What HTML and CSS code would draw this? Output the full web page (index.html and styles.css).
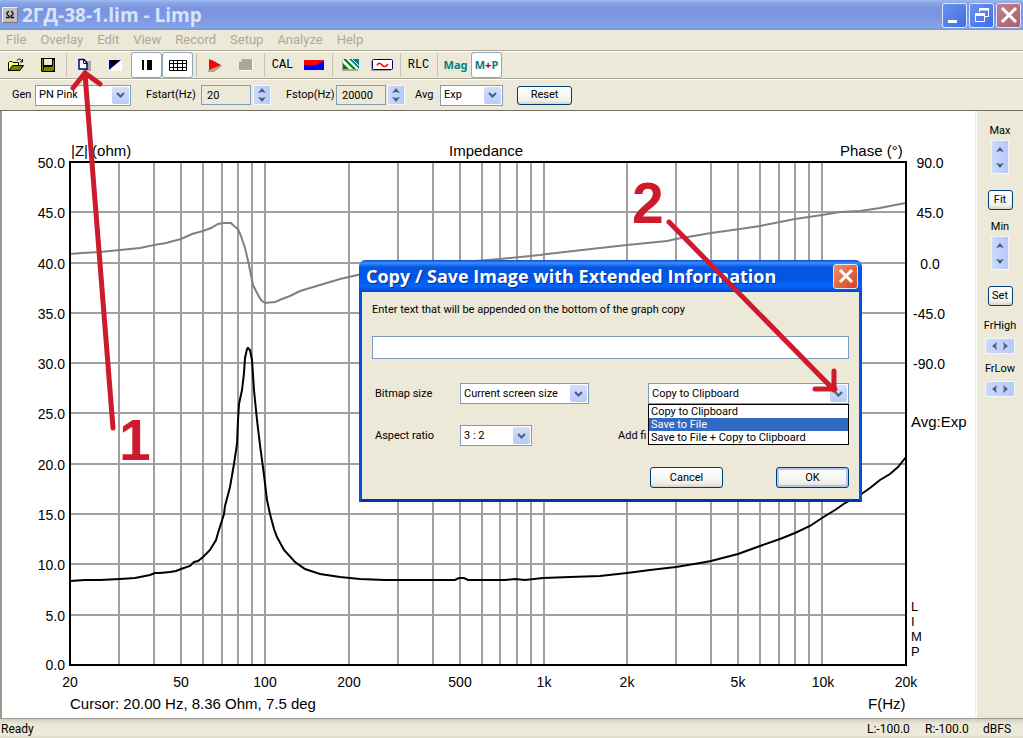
FILE: index.html
```html
<!DOCTYPE html>
<html lang="en">
<head>
    <meta charset="UTF-8">
    <meta name="viewport" content="width=device-width, initial-scale=1.0">
    <title>2ГД-38-1.lim - Limp</title>
    <link rel="stylesheet" href="styles.css">
</head>
<body>
    <svg class="defs" width="0" height="0" aria-hidden="true">
        <symbol id="down" viewBox="0 0 9 6"><path d="M1 1l3.500 3.500L8 1" fill="none" stroke="#4d6185" stroke-width="2.200"/></symbol>
        <symbol id="tri-up" viewBox="0 0 8 5"><path d="M0 5L4 0l4 5L4 4z" fill="#4d6185"/></symbol>
        <symbol id="tri-down" viewBox="0 0 8 5"><path d="M0 0l4 5 4-5-4 1z" fill="#4d6185"/></symbol>
        <symbol id="tri-left" viewBox="0 0 5 8"><path d="M5 0L0 4l5 4-1-4z" fill="#4d6185"/></symbol>
        <symbol id="tri-right" viewBox="0 0 5 8"><path d="M0 0l5 4-5 4 1-4z" fill="#4d6185"/></symbol>
    </svg>

    <header class="titlebar">
        <svg class="app-icon" width="16" height="16" viewBox="0 0 16 16"><path fill="#c0c0c0" d="M0 0h16v16H0z"/><path d="M.5 15V.5H15" fill="none" stroke="#eee"/><path d="M1 15.500h14.500V1" fill="none" stroke="#777"/><path d="M4 10.500h3V9L5 7.500V6l1.500-1.500H7M12 10.500H9V9l2-1.500V6L9.500 4.500H9" fill="none" stroke="#111" stroke-width="1.300"/></svg>
        <h1>2ГД-38-1.lim - Limp</h1>
        <div class="win-btns">
            <button class="win-btn" aria-label="Minimize"><svg width="22" height="22" viewBox="0 0 22 22"><path fill="#fff" d="M4 16h9v3H4z"/></svg></button>
            <button class="win-btn" aria-label="Restore"><svg width="22" height="22" viewBox="0 0 22 22"><path fill="none" stroke="#fff" d="M8.500 8V4.500h9v8H14M4.500 9.500h9v8h-9z"/><path fill="#fff" d="M8 4h10v2.500H8zM4 9h10v3H4z"/></svg></button>
            <button class="win-btn close" aria-label="Close"><svg width="22" height="22" viewBox="0 0 22 22"><path stroke="#fff" stroke-width="3" d="M4 4l14 14M18 4L4 18"/></svg></button>
        </div>
    </header>

    <nav class="menubar">
        <a href="#">File</a><a href="#">Overlay</a><a href="#">Edit</a><a href="#">View</a><a href="#">Record</a><a href="#">Setup</a><a href="#">Analyze</a><a href="#">Help</a>
    </nav>

    <div class="toolbar">
        <button class="tool" aria-label="Open"><svg width="17" height="14" viewBox="0 0 17 14"><path fill="#ff6" d="M1 4h4l1 1h5v3H4l-3 5z"/><path fill="#808000" d="M4 8h12l-4 5H1z"/><path fill="none" stroke="#000" d="M.5 13V4.500l1-1H4l1 1h5.500V8M1 12.500h10.500L15.500 7.500H4.500L1 12.500M9 2.500c1-2 4-2 5 1M14.500 1v3H12"/></svg></button>
        <button class="tool" aria-label="Save"><svg width="14" height="14" viewBox="0 0 14 14"><path d="M0 0h14v14H1l-1-1z"/><path fill="#ece9d8" d="M3 1h8v6H3zM9 10h2v3H9z"/><path fill="#808000" d="M1 1h1v11h1V9h8V8h1V2h1v10h-1v1H2l-1-1z"/></svg></button>
        <span class="sep"></span>
        <button class="tool" aria-label="Copy"><svg width="15" height="14" viewBox="0 0 15 14"><path fill="#aca899" d="M8 3h6v10H8z"/><path fill="#fff" stroke="#000080" stroke-width="1.500" d="M2 1.500h5L10 5v6H2z"/><path fill="none" stroke="#000080" d="M6.500 1v4.500H10"/></svg></button>
        <button class="tool" aria-label="Invert colors"><svg width="13" height="11" viewBox="0 0 13 11"><path fill="#fff" d="M0 0h13v11H0z"/><path fill="#000080" d="M0 0h12L0 10z"/><path d="M2 0h8L2 7z"/></svg></button>
        <button class="tool on" aria-label="Pause"><svg width="12" height="10" viewBox="0 0 12 10"><path d="M1 0h2v10H1zM6 0h5v10H6z"/></svg></button>
        <button class="tool on" aria-label="Grid"><svg width="18" height="11" viewBox="0 0 18 11"><path fill="none" stroke="#000" d="M.5.500h17v10H.5zM0 3.500h18M0 7.500h18M4.500 0v11M8.500 0v11M13.500 0v11"/></svg></button>
        <span class="sep"></span>
        <button class="tool" aria-label="Record"><svg width="14" height="13" viewBox="0 0 14 13"><path fill="#aca899" d="M2 1h3l9 6-8 6H0v-2h2z"/><path fill="red" d="M1 0l12 6-12 5z"/></svg></button>
        <button class="tool" aria-label="Stop"><svg width="14" height="12" viewBox="0 0 14 12"><path fill="#fff" d="M3 1h11v9l-2 2H1z"/><path fill="#aca899" d="M3 0h10v11H0V3h2z"/></svg></button>
        <span class="sep"></span>
        <button class="tool mono">CAL</button>
        <button class="tool" aria-label="Spectrum"><svg width="20" height="10" viewBox="0 0 20 10"><path fill="#00f" d="M0 0h20v10H0z"/><path fill="red" d="M0 0h20v1l-8 4H0z"/></svg></button>
        <span class="sep"></span>
        <button class="tool" aria-label="Overlay"><svg width="17" height="12" viewBox="0 0 17 12"><path fill="#aca899" d="M0 2h16v10H0z"/><path fill="#fff" d="M1 0h16v10H1z"/><path fill="#008000" d="M1 0h3l10 10h-3zM1 4l6 6H1z"/><path fill="#008080" d="M7 0h10v10L15 8z"/><path stroke="#fff" d="M10 0l7 7"/></svg></button>
        <button class="tool" aria-label="Generator"><svg width="22" height="12" viewBox="0 0 22 12"><path fill="#aca899" d="M0 2h20v10H0z"/><rect x="1.500" y=".5" width="20" height="10" rx="1" fill="#fff" stroke="#000080"/><path fill="none" stroke="red" stroke-width="1.500" d="M6 6.500c1-3 3-3 5-.5s4 2 6-1"/></svg></button>
        <span class="sep"></span>
        <button class="tool mono">RLC</button>
        <span class="sep"></span>
        <button class="tool teal">Mag</button>
        <button class="tool teal on">M<i>+</i>P</button>
    </div>

    <form class="params">
        <label for="gen">Gen</label>
        <span class="combo gen"><select id="gen"><option>PN Pink</option></select><span class="caret"><svg width="9" height="6"><use href="#down"/></svg></span></span>
        <label for="fstart">Fstart(Hz)</label>
        <input class="num" id="fstart" value="20">
        <span class="spin"><button type="button" aria-label="Fstart up"><svg width="8" height="5"><use href="#tri-up"/></svg></button><button type="button" aria-label="Fstart down"><svg width="8" height="5"><use href="#tri-down"/></svg></button></span>
        <label for="fstop">Fstop(Hz)</label>
        <input class="num" id="fstop" value="20000">
        <span class="spin"><button type="button" aria-label="Fstop up"><svg width="8" height="5"><use href="#tri-up"/></svg></button><button type="button" aria-label="Fstop down"><svg width="8" height="5"><use href="#tri-down"/></svg></button></span>
        <label for="avg">Avg</label>
        <span class="combo avg"><select id="avg"><option>Exp</option></select><span class="caret"><svg width="9" height="6"><use href="#down"/></svg></span></span>
        <button type="button" class="btn reset">Reset</button>
    </form>

    <main class="workspace">
        <svg class="chart" viewBox="2 111 973 607" preserveAspectRatio="xMinYMin meet" role="img" aria-label="Impedance">
            <g class="grid">
                <path d="M119 162v502M154 162v502M181 162v502M203 162v502M222 162v502M238 162v502M252 162v502M265 162v502M349 162v502M398 162v502M433 162v502M460 162v502M482 162v502M500 162v502M517 162v502M531 162v502M544 162v502M627 162v502M676 162v502M711 162v502M738 162v502M760 162v502M779 162v502M795 162v502M809 162v502M822 162v502"/>
                <path d="M70 212h836M70 263h836M70 313h836M70 363h836M70 413h836M70 464h836M70 514h836M70 564h836M70 615h836"/>
            </g>
            <polyline class="phase" points="70,254 82,253 100,252 120,250 140,248 154,245 166,243 181,239 192,234 203,231 211,228 218,224 224,223 231,223 234,226 238,229 241,236 245,248 249,265 253,285 257,293 261,300 265,303 275,302 282,299 290,296 300,291 320,285 340,279 362,274 400,268 450,263 500,259 540,255 547,254 600,248 627,245 667,241 676,239 711,233 740,229 760,226 780,222 795,219 822,215 840,212 860,211 880,208 895,205 906,203"/>
            <polyline class="imp" points="70,581 85,580 100,580 120,579 135,578 150,575 155,573 160,573 170,572 176,571 181,569 190,566 194,562 198,561 203,557 210,550 216,540 218,533 224,514 225,506 230,487 234,464 237,444 238,420 239,404 242,390 244,373 245,358 247,349 248,348 250,350 252,360 254,390 257,420 260,445 264,475 267,500 270,514 274,529 277,537 284,550 295,562 305,569 320,574 340,577 360,579 385,580 430,580 455,580 459,578 464,578 468,580 480,580 505,580 515,579 525,580 543,578 570,577 600,576 627,573 650,570 676,567 700,563 711,561 738,554 760,546 780,539 795,533 810,526 822,518 835,510 845,503 860,495 870,488 880,480 890,474 898,467 906,457"/>
            <path class="frame" d="M70 162h836v503H70z"/>
            <g class="tick end">
                <text x="65" y="168">50.0</text><text x="65" y="218">45.0</text><text x="65" y="269">40.0</text><text x="65" y="319">35.0</text><text x="65" y="369">30.0</text><text x="65" y="419">25.0</text><text x="65" y="470">20.0</text><text x="65" y="520">15.0</text><text x="65" y="570">10.0</text><text x="65" y="621">5.0</text><text x="65" y="670">0.0</text>
            </g>
            <g class="tick mid">
                <text x="930" y="168">90.0</text><text x="930" y="218">45.0</text><text x="930" y="269">0.0</text><text x="929" y="319">-45.0</text><text x="929" y="369">-90.0</text>
                <text x="70" y="687">20</text><text x="181" y="687">50</text><text x="265" y="687">100</text><text x="349" y="687">200</text><text x="460" y="687">500</text><text x="544" y="687">1k</text><text x="627" y="687">2k</text><text x="738" y="687">5k</text><text x="823" y="687">10k</text><text x="906" y="687">20k</text>
            </g>
            <g class="name">
                <text x="71" y="156">|Z| (ohm)</text><text x="449" y="156">Impedance</text><text x="840" y="156">Phase (°)</text>
                <text x="70" y="709">Cursor: 20.00 Hz, 8.36 Ohm, 7.5 deg</text><text x="868" y="709">F(Hz)</text>
                <text x="911" y="427">Avg:Exp</text>
            </g>
            <g class="logo">
                <text x="911" y="611">L</text><text x="911" y="626">I</text><text x="911" y="641">M</text><text x="911" y="656">P</text>
            </g>
        </svg>

        <aside class="side">
            <div class="group">
                <span>Max</span>
                <div class="spin tall"><button aria-label="Max up"><svg width="8" height="5"><use href="#tri-up"/></svg></button><button aria-label="Max down"><svg width="8" height="5"><use href="#tri-down"/></svg></button></div>
                <button class="btn small">Fit</button>
            </div>
            <div class="group">
                <span>Min</span>
                <div class="spin tall"><button aria-label="Min up"><svg width="8" height="5"><use href="#tri-up"/></svg></button><button aria-label="Min down"><svg width="8" height="5"><use href="#tri-down"/></svg></button></div>
                <button class="btn small">Set</button>
            </div>
            <div class="freq">
                <span>FrHigh</span>
                <div class="spin wide"><button aria-label="High limit down"><svg width="5" height="8"><use href="#tri-left"/></svg></button><button aria-label="High limit up"><svg width="5" height="8"><use href="#tri-right"/></svg></button></div>
            </div>
            <div class="freq">
                <span>FrLow</span>
                <div class="spin wide"><button aria-label="Low limit down"><svg width="5" height="8"><use href="#tri-left"/></svg></button><button aria-label="Low limit up"><svg width="5" height="8"><use href="#tri-right"/></svg></button></div>
            </div>
        </aside>
    </main>

    <footer class="status">
        <span class="ready">Ready</span><span>L:-100.0</span><span>R:-100.0</span><span>dBFS</span>
    </footer>

    <section class="dialog" role="dialog" aria-labelledby="dlg-title">
        <div class="dialog-title">
            <h2 id="dlg-title">Copy / Save Image with Extended Information</h2>
            <button class="win-btn red" aria-label="Close"><svg width="22" height="22" viewBox="0 0 22 22"><path stroke="#fff" stroke-width="3" d="M5 5l12 12M17 5L5 17"/></svg></button>
        </div>
        <form class="dialog-body">
            <label for="info">Enter text that will be appended on the bottom of the graph copy</label>
            <input class="info" id="info" type="text">
            <div class="row">
                <label class="key" for="size">Bitmap size</label>
                <span class="combo size"><select id="size"><option>Current screen size</option></select><span class="caret"><svg width="9" height="6"><use href="#down"/></svg></span></span>
                <div class="target">
                    <span class="combo"><select id="target" aria-label="Target"><option>Copy to Clipboard</option></select><span class="caret"><svg width="9" height="6"><use href="#down"/></svg></span></span>
                    <ul class="list"><li>Copy to Clipboard</li><li class="sel">Save to File</li><li>Save to File + Copy to Clipboard</li></ul>
                </div>
            </div>
            <div class="row">
                <label class="key" for="ratio">Aspect ratio</label>
                <span class="combo ratio"><select id="ratio"><option>3 : 2</option></select><span class="caret"><svg width="9" height="6"><use href="#down"/></svg></span></span>
                <span class="add">Add fi</span>
            </div>
            <div class="actions">
                <button type="button" class="btn">Cancel</button>
                <button type="button" class="btn default">OK</button>
            </div>
        </form>
    </section>

    <svg class="marks" viewBox="0 0 1023 738" preserveAspectRatio="xMinYMin meet">
        <path d="M113 428L85 74M73 88l12-15 15 11M669 222l165 168M815 389h20M834 371v19"/>
        <text x="119" y="460">1</text>
        <text x="632" y="223">2</text>
    </svg>
</body>
</html>
```

FILE: styles.css
```css
*{margin:0;padding:0;box-sizing:border-box}
body{min-height:100vh;display:flex;flex-direction:column;position:relative;background:#ece9d8;color:#000;font:11px/14px Roboto,"Noto Sans",sans-serif;overflow:hidden}
button,input,select{font:inherit;color:inherit}
button{border:none;background:none}
svg{display:block}
a{text-decoration:none;color:inherit}
.defs{position:absolute}

/* main window caption */
.titlebar{display:flex;align-items:center;height:30px;padding:0 2px;background:linear-gradient(#9db9ee 0,#8aa6e6 3px,#7b94e0 8px,#7d97e2 18px,#82a6e8 27px,#7a92dc 30px)}
.titlebar h1{flex:1;margin-left:4px;font:bold 19px/26px "Open Sans","Noto Sans",sans-serif;color:#d8e4f8}
.win-btns{display:flex;gap:2px}
.win-btn{width:25px;height:25px;border:1px solid #dfe8fb;border-radius:3px;background:linear-gradient(135deg,#6d92ee,#3f6ee6);display:flex;align-items:center;justify-content:center}
.win-btn.close{background:linear-gradient(135deg,#c08090,#a8606c)}
.win-btn.red{background:linear-gradient(135deg,#ee9070,#d8411c)}

.menubar{display:flex;gap:14px;height:21px;padding-left:6px;font-size:13px;line-height:20px;color:#aca899;border-bottom:1px solid #aca899}

.toolbar{display:flex;align-items:center;height:28px;padding-left:1px;border-top:1px solid #fff;border-bottom:1px solid #aca899}
.tool{width:31px;height:26px;display:flex;align-items:center;justify-content:center}
.tool.on{background:#fff;border:1px solid #8ba8bd;border-radius:3px}
.sep{width:6px;height:24px;background:linear-gradient(#c5c2b2,#c5c2b2) center/1px 100% no-repeat}
.mono{font:12px "Liberation Mono",monospace}
.teal{font-family:"Noto Sans",sans-serif;font-weight:bold;color:#008080}
.teal i{font-style:normal;color:#a00000}

.params{display:grid;grid-template-columns:23px 111px 55px 52px 33px 50px 51px 28px 25px 77px auto;justify-content:start;align-items:center;height:31px;padding-left:12px;border-top:1px solid #fff}
.combo{display:flex;height:21px;padding:1px;background:#fff;border:1px solid #7f9db9}
.combo select{flex:1;min-width:0;padding-left:2px;border:none;background:none;appearance:none}
.caret{width:17px;background:linear-gradient(#d3e0fd,#b9cbf6);border-radius:2px;display:flex;align-items:center;justify-content:center}
.gen{width:96px}
.avg{width:63px}
.num{width:50px;height:20px;padding-left:5px;background:#ece9d8;border:1px solid #7f9db9}
.spin{display:flex;flex-direction:column;width:18px;height:20px;border:1px solid #f5f6fb;background:linear-gradient(90deg,#cbd9fd,#b6c9f8)}
.spin button{flex:1;display:flex;align-items:center;justify-content:center}
.spin.tall{height:34px}
.spin.wide{flex-direction:row;width:30px;height:16px;padding:0 3px}
.btn{border:1px solid #003c74;border-radius:3px;background:linear-gradient(#fff,#f0f0ea 80%,#d8d2c8);text-align:center}
.reset{width:55px;height:19px}

.workspace{flex:1;display:flex;border-top:1px solid #716f64}
.chart{flex:1;min-width:0;background:#fff;border-left:2px solid #9c9a8c;border-right:1px solid #f0eee0;font-family:"Liberation Sans",Arial,sans-serif}
.grid path{fill:none;stroke:#a0a0a0;stroke-width:2}
.frame{fill:none;stroke:#000;stroke-width:2}
.phase,.imp{fill:none;stroke-width:2;stroke:#808080}
.imp{stroke:#000}
.grid,.frame{shape-rendering:crispEdges}
.tick{font-size:14px}
.name{font-size:15px}
.logo{font-size:13px}
.end{text-anchor:end}
.mid{text-anchor:middle}

.side{width:47px;padding-top:13px;border-left:1px solid #fff;display:flex;flex-direction:column;align-items:center;text-align:center}
.group,.freq{display:flex;flex-direction:column;align-items:center;gap:2px}
.group{height:96px}
.freq{height:43px;padding-top:3px;gap:5px}
.small{width:25px;height:20px;margin-top:14px}

.status{display:flex;height:20px;padding-left:1px;font-size:12px;line-height:20px;border-top:1px solid #9c9a8c;background:linear-gradient(#d0cdbc,#ece9d8 5px,#ece9d8 16px,#dedac8)}
.status span{width:58px}
.status .ready{flex:1}
.status span:last-child{width:40px}

/* save image dialog */
.dialog{position:absolute;left:359px;top:260px;width:503px;border:3px solid #0450dd;border-top:none;border-bottom-color:#0234b0;border-radius:7px 7px 0 0;background:#ece9d8}
.dialog-title{display:flex;align-items:center;height:32px;margin:0 -3px;padding:0 4px 0 7px;border-radius:7px 7px 0 0;background:linear-gradient(#0a4ccc,#3b8cff 3px,#0457e2 7px,#0254e4 18px,#0465fc 26px,#0148d0)}
.dialog-title h2{flex:1;white-space:nowrap;font:bold 18px/26px "Open Sans","Noto Sans",sans-serif;color:#fff;text-shadow:1px 1px #0b2f8f}
.dialog-body{padding:11px 10px 11px}
.info{display:block;width:100%;height:23px;margin:19px 0 24px;padding:0 4px;border:1px solid #7f9db9;background:#fff}
.row{display:flex;align-items:center;height:21px;margin-bottom:21px}
.key{width:88px;padding-left:3px}
.size{width:129px}
.ratio{width:72px}
.target{position:relative;width:201px;margin-left:auto}
.list{position:absolute;z-index:1;top:100%;left:0;right:0;list-style:none;background:#fff;border:1px solid #000}
.list li{padding-left:2px;line-height:13px}
.list .sel{background:#316ac5;color:#fff}
.add{margin-left:86px}
.actions{display:flex;justify-content:flex-end;gap:53px;height:21px}
.actions .btn{width:73px}
.default{box-shadow:inset 0 0 0 2px #b0c8f0}

/* step arrows over everything */
.marks{position:absolute;z-index:2;top:0;left:0;width:100%;pointer-events:none}
.marks path{fill:none;stroke:#ce1a2d;stroke-width:5;stroke-linecap:round}
.marks text{font:bold 57px "Liberation Sans",Arial,sans-serif;fill:#ce1a2d}
```
